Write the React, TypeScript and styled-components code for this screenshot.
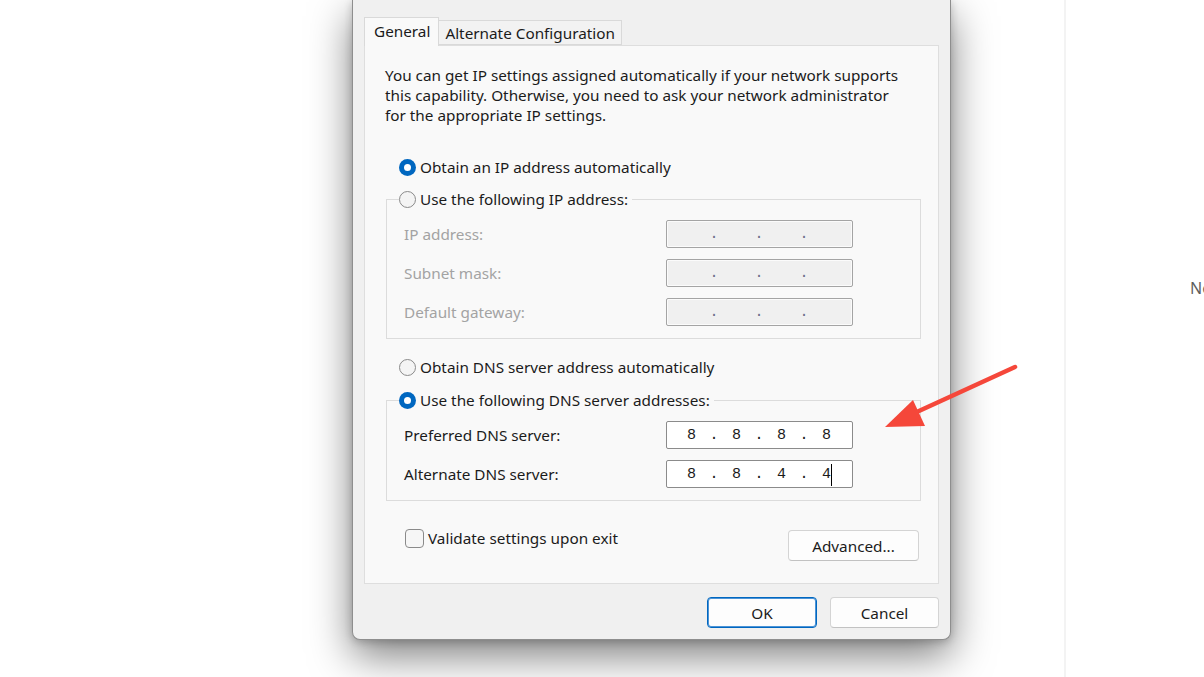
import React from 'react';
import styled, { createGlobalStyle } from 'styled-components';

const GlobalStyle = createGlobalStyle`
  html, body {
    margin: 0;
    padding: 0;
    background: #ffffff;
  }
  body {
    font-family: "Noto Sans", "Open Sans", sans-serif;
  }
`;

const Stage = styled.div`
  position: relative;
  width: 1204px;
  height: 677px;
  overflow: hidden;
  display: flex;
  align-items: flex-start;
  padding-left: 352px;
  box-sizing: border-box;
  background: #ffffff;
`;

const Dialog = styled.div`
  width: 599px;
  box-sizing: border-box;
  background: #f0f0f0;
  border: 1px solid #8e8e8e;
  border-top: none;
  border-radius: 0 0 8px 8px;
  padding: 17px 11px 11px 11px;
  box-shadow: 0 16px 42px rgba(0, 0, 0, 0.5), 0 2px 8px rgba(0, 0, 0, 0.2);
  font-size: 15.3px;
  color: #1b1b1b;
  display: flex;
  flex-direction: column;
`;

const TabStrip = styled.div`
  display: flex;
  align-items: flex-end;
  height: 28px;
  position: relative;
  z-index: 1;
`;

const Tab = styled.div<{ $active?: boolean }>`
  box-sizing: border-box;
  height: ${p => (p.$active ? '29px' : '25px')};
  margin-bottom: ${p => (p.$active ? '-1px' : '0')};
  padding: ${p => (p.$active ? '3px 8px 0 9px' : '2px 6px 0 6px')};
  background: ${p => (p.$active ? '#f9f9f9' : '#f2f2f2')};
  border: 1px solid #d9d9d9;
  border-bottom: ${p => (p.$active ? 'none' : '1px solid #d9d9d9')};
  ${p => (p.$active ? '' : 'border-left: none;')}
  line-height: 20px;
  white-space: nowrap;
`;

const Panel = styled.div`
  box-sizing: border-box;
  height: 539px;
  background: #f9f9f9;
  border: 1px solid #dedede;
  padding: 19px 17px 0 20px;
  display: flex;
  flex-direction: column;
`;

const Intro = styled.p`
  margin: 0;
  line-height: 20px;
`;

const RadioRow = styled.label`
  display: flex;
  align-items: center;
  gap: 4px;
  height: 20px;
  line-height: 20px;
  margin-left: 14px;
  white-space: nowrap;
  background: #f9f9f9;
`;

const RadioDot = styled.span<{ $on?: boolean }>`
  box-sizing: border-box;
  width: 17px;
  height: 17px;
  border-radius: 50%;
  flex-shrink: 0;
  background: ${p => (p.$on ? '#0067c0' : '#f4f4f4')};
  border: ${p => (p.$on ? 'none' : '1px solid #8a8a8a')};
  display: flex;
  align-items: center;
  justify-content: center;

  &::after {
    content: '';
    width: 7px;
    height: 7px;
    border-radius: 50%;
    background: #ffffff;
    display: ${p => (p.$on ? 'block' : 'none')};
  }
`;

const Group = styled.fieldset`
  margin: 0 0 0 1px;
  width: 535px;
  box-sizing: border-box;
  border: 1px solid #dcdcdc;
  padding: 11px 0 12px 17px;
  display: flex;
  flex-direction: column;
  gap: 11px;
`;

const GroupLegend = styled.legend`
  height: 20px;
  line-height: 20px;
  padding: 0 4px 0 0;
  margin-left: -5px;
`;

const FieldRow = styled.div`
  display: flex;
  align-items: center;
  height: 28px;
`;

const FieldLabel = styled.span<{ $disabled?: boolean }>`
  width: 262px;
  color: ${p => (p.$disabled ? '#a3a3a3' : '#1b1b1b')};
`;

const IpBox = styled.div<{ $disabled?: boolean }>`
  box-sizing: border-box;
  width: 187px;
  height: 28px;
  border: 1px solid ${p => (p.$disabled ? '#a4a4a4' : '#8b8b8b')};
  border-radius: 2px;
  background: ${p => (p.$disabled ? '#f0f0f0' : '#ffffff')};
  box-shadow: inset 0 0 0 1px ${p => (p.$disabled ? '#fbfbfb' : '#ffffff')};
  display: flex;
  align-items: center;
  padding-left: 9px;
  font-family: "Liberation Mono", "DejaVu Sans Mono", monospace;
  font-size: 15px;
  color: #1b1b1b;
`;

const Octet = styled.span`
  width: 31px;
  text-align: center;
  position: relative;
`;

const Dot = styled.span<{ $disabled?: boolean }>`
  width: 14px;
  text-align: center;
  color: ${p => (p.$disabled ? '#6d6f8a' : '#1b1b1b')};
`;

const Caret = styled.span`
  position: absolute;
  top: -2px;
  left: 20px;
  width: 1px;
  height: 22px;
  background: #000000;
`;

const BottomRow = styled.div`
  display: flex;
  align-items: flex-start;
  justify-content: space-between;
  margin-top: 27px;
  padding-right: 2px;
`;

const CheckRow = styled.label`
  display: flex;
  align-items: center;
  gap: 4px;
  height: 20px;
  margin-left: 20px;
  line-height: 20px;
`;

const CheckBox = styled.span`
  box-sizing: border-box;
  width: 19px;
  height: 19px;
  border: 1px solid #8a8a8a;
  border-radius: 4px;
  background: #f6f6f6;
`;

const Button = styled.button<{ $primary?: boolean; $width: number }>`
  box-sizing: border-box;
  width: ${p => p.$width}px;
  height: 31px;
  font-family: inherit;
  font-size: 15.3px;
  color: #1b1b1b;
  background: #fdfdfd;
  border: 1px solid ${p => (p.$primary ? '#0067c0' : '#d4d4d4')};
  border-bottom-color: ${p => (p.$primary ? '#0067c0' : '#c2c2c2')};
  box-shadow: ${p => (p.$primary ? 'inset 0 0 0 1px #4c93d6' : 'none')};
  border-radius: 4px;
  padding: 0;
`;

const AdvancedButton = styled(Button)`
  margin-top: 2px;
`;

const Footer = styled.div`
  display: flex;
  justify-content: flex-end;
  gap: 13px;
  margin-top: 13px;
`;

const SidePane = styled.div`
  margin-left: 113px;
  height: 677px;
  border-left: 2px solid #f3f3f3;
  padding: 277px 0 0 124px;
  font-family: "Noto Sans", sans-serif;
  font-size: 16px;
  color: #5e5e5e;
  white-space: nowrap;
`;

const Arrow = styled.svg`
  position: absolute;
  left: 880px;
  top: 360px;
`;

type Ip = string[] | null;

function IpField({ value, caret }: { value: Ip; caret?: boolean }) {
  const disabled = value === null;
  const parts = value ?? ['', '', '', ''];
  return (
    <IpBox $disabled={disabled}>
      {parts.map((p, i) => (
        <React.Fragment key={i}>
          <Octet>
            {p}
            {caret && i === 3 && <Caret />}
          </Octet>
          {i < 3 && <Dot $disabled={disabled}>.</Dot>}
        </React.Fragment>
      ))}
    </IpBox>
  );
}

export default function App() {
  const staticRows = ['IP address:', 'Subnet mask:', 'Default gateway:'];

  return (
    <>
      <GlobalStyle />
      <Stage>
        <Dialog>
          <TabStrip>
            <Tab $active>General</Tab>
            <Tab>Alternate Configuration</Tab>
          </TabStrip>
          <Panel>
            <Intro>
              You can get IP settings assigned automatically if your network supports
              <br />
              this capability. Otherwise, you need to ask your network administrator
              <br />
              for the appropriate IP settings.
            </Intro>

            <RadioRow style={{ marginTop: 32 }}>
              <RadioDot $on />
              Obtain an IP address automatically
            </RadioRow>

            <Group style={{ marginTop: 12 }}>
              <GroupLegend>
                <RadioRow as="span" style={{ marginLeft: 0 }}>
                  <RadioDot />
                  Use the following IP address:
                </RadioRow>
              </GroupLegend>
              {staticRows.map(label => (
                <FieldRow key={label}>
                  <FieldLabel $disabled>{label}</FieldLabel>
                  <IpField value={null} />
                </FieldRow>
              ))}
            </Group>

            <RadioRow style={{ marginTop: 18 }}>
              <RadioDot />
              Obtain DNS server address automatically
            </RadioRow>

            <Group style={{ marginTop: 13 }}>
              <GroupLegend>
                <RadioRow as="span" style={{ marginLeft: 0 }}>
                  <RadioDot $on />
                  Use the following DNS server addresses:
                </RadioRow>
              </GroupLegend>
              <FieldRow>
                <FieldLabel>Preferred DNS server:</FieldLabel>
                <IpField value={['8', '8', '8', '8']} />
              </FieldRow>
              <FieldRow>
                <FieldLabel>Alternate DNS server:</FieldLabel>
                <IpField value={['8', '8', '4', '4']} caret />
              </FieldRow>
            </Group>

            <BottomRow>
              <CheckRow>
                <CheckBox />
                Validate settings upon exit
              </CheckRow>
              <AdvancedButton $width={131}>Advanced...</AdvancedButton>
            </BottomRow>
          </Panel>
          <Footer>
            <Button $primary $width={110}>OK</Button>
            <Button $width={109}>Cancel</Button>
          </Footer>
        </Dialog>
        <SidePane>Network</SidePane>
        <Arrow width="140" height="75" viewBox="880 360 140 75">
          <line x1="1015" y1="367" x2="908" y2="416" stroke="#f5473a" strokeWidth="4.5" strokeLinecap="round" />
          <polygon points="885,427 913,400 925,426" fill="#f5473a" />
        </Arrow>
      </Stage>
    </>
  );
}
